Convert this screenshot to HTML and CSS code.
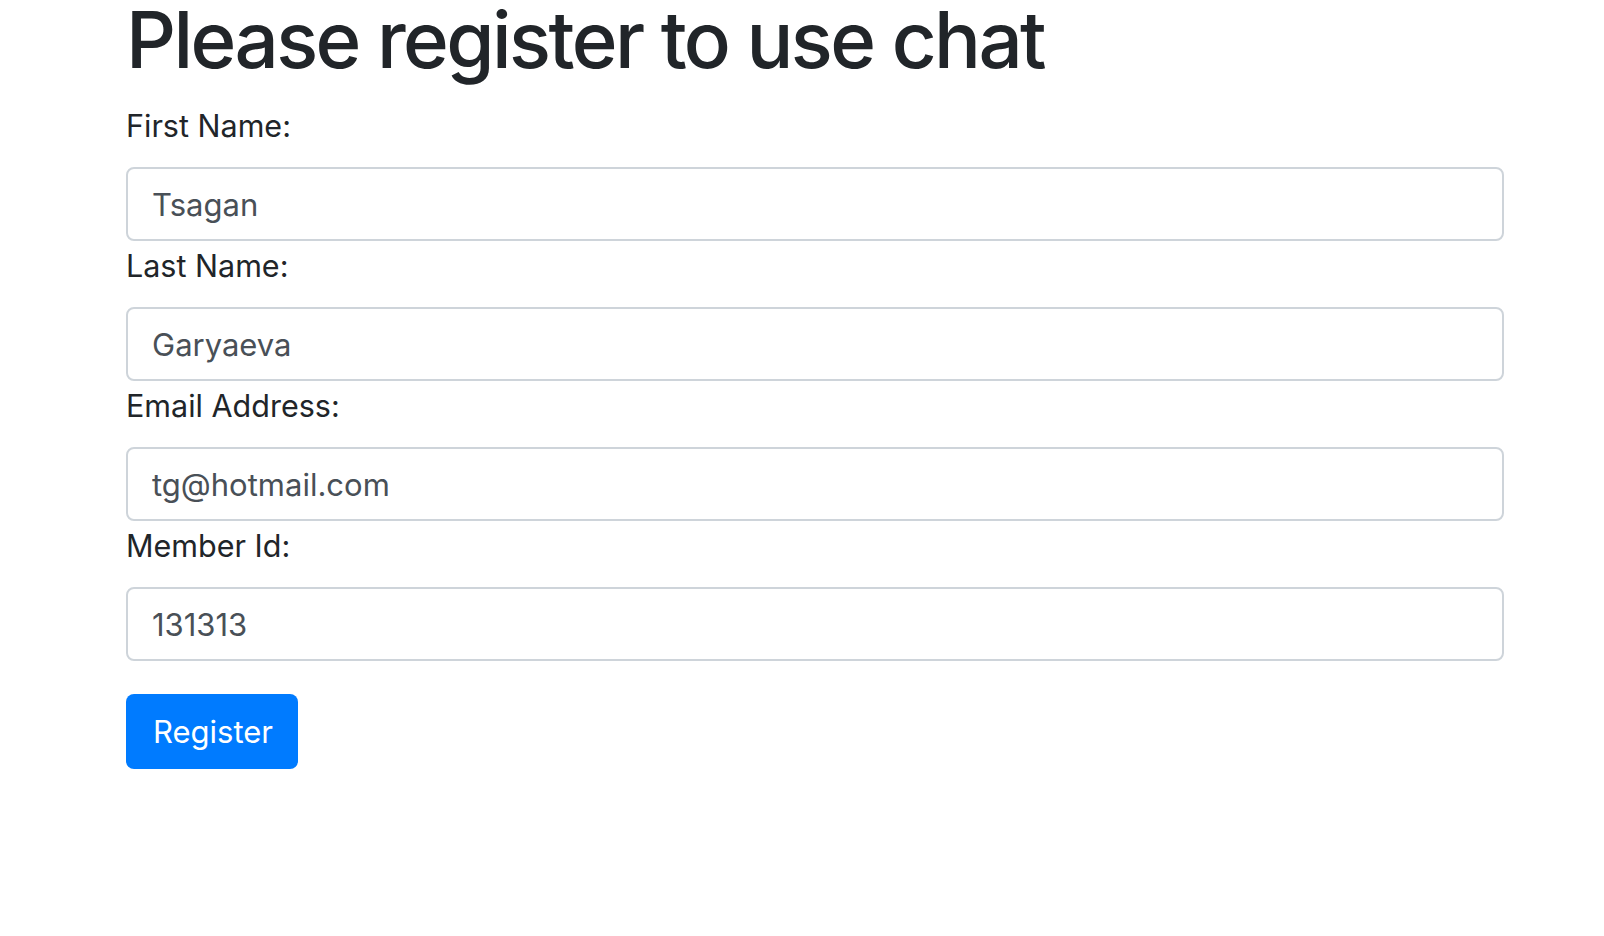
FILE: index.html
```html
<!DOCTYPE html>
<html lang="en">
<head>
<meta charset="utf-8">
<title>Register</title>
<link rel="stylesheet" href="styles.css">
</head>
<body>
<div class="container">
  <h1 class="title">Please register to use chat</h1>
  <form class="form">
    <label class="label" for="first">First Name:</label>
    <input class="input" id="first" type="text" value="Tsagan">
    <label class="label" for="last">Last Name:</label>
    <input class="input" id="last" type="text" value="Garyaeva">
    <label class="label" for="email">Email Address:</label>
    <input class="input" id="email" type="text" value="tg@hotmail.com">
    <label class="label" for="member">Member Id:</label>
    <input class="input" id="member" type="text" value="131313">
    <button class="btn" type="button">Register</button>
  </form>
</div>
</body>
</html>
```
FILE: styles.css
```css
html, body {
  margin: 0;
  padding: 0;
  background: #ffffff;
}
body {
  font-family: Inter, "Noto Sans", "Liberation Sans", sans-serif;
  color: #212529;
}
.container {
  padding-left: 126px;
  width: 1378px;
}
.title {
  margin: 0 0 26px 0;
  font-size: 78px;
  line-height: 80px;
  font-weight: 500;
  letter-spacing: -2.6px;
  color: #212529;
}
.form {
  display: flex;
  flex-direction: column;
  align-items: flex-start;
}
.label {
  display: block;
  font-size: 30.5px;
  line-height: 40px;
  height: 40px;
  margin-bottom: 21px;
  color: #212529;
}
.input {
  box-sizing: border-box;
  width: 1378px;
  height: 74px;
  margin: 0 0 5px 0;
  padding: 0 24px;
  border: 2px solid #ced4da;
  border-radius: 8px;
  font-family: Inter, "Noto Sans", "Liberation Sans", sans-serif;
  font-size: 31px;
  color: #495057;
  background: #ffffff;
  outline: none;
}
.btn {
  box-sizing: border-box;
  margin-top: 28px;
  width: 172px;
  height: 75px;
  padding: 0 27px;
  border: none;
  border-radius: 8px;
  background: #007bff;
  color: #ffffff;
  font-family: Inter, "Noto Sans", "Liberation Sans", sans-serif;
  font-size: 31px;
  line-height: 75px;
  text-align: left;
  cursor: pointer;
}
```
